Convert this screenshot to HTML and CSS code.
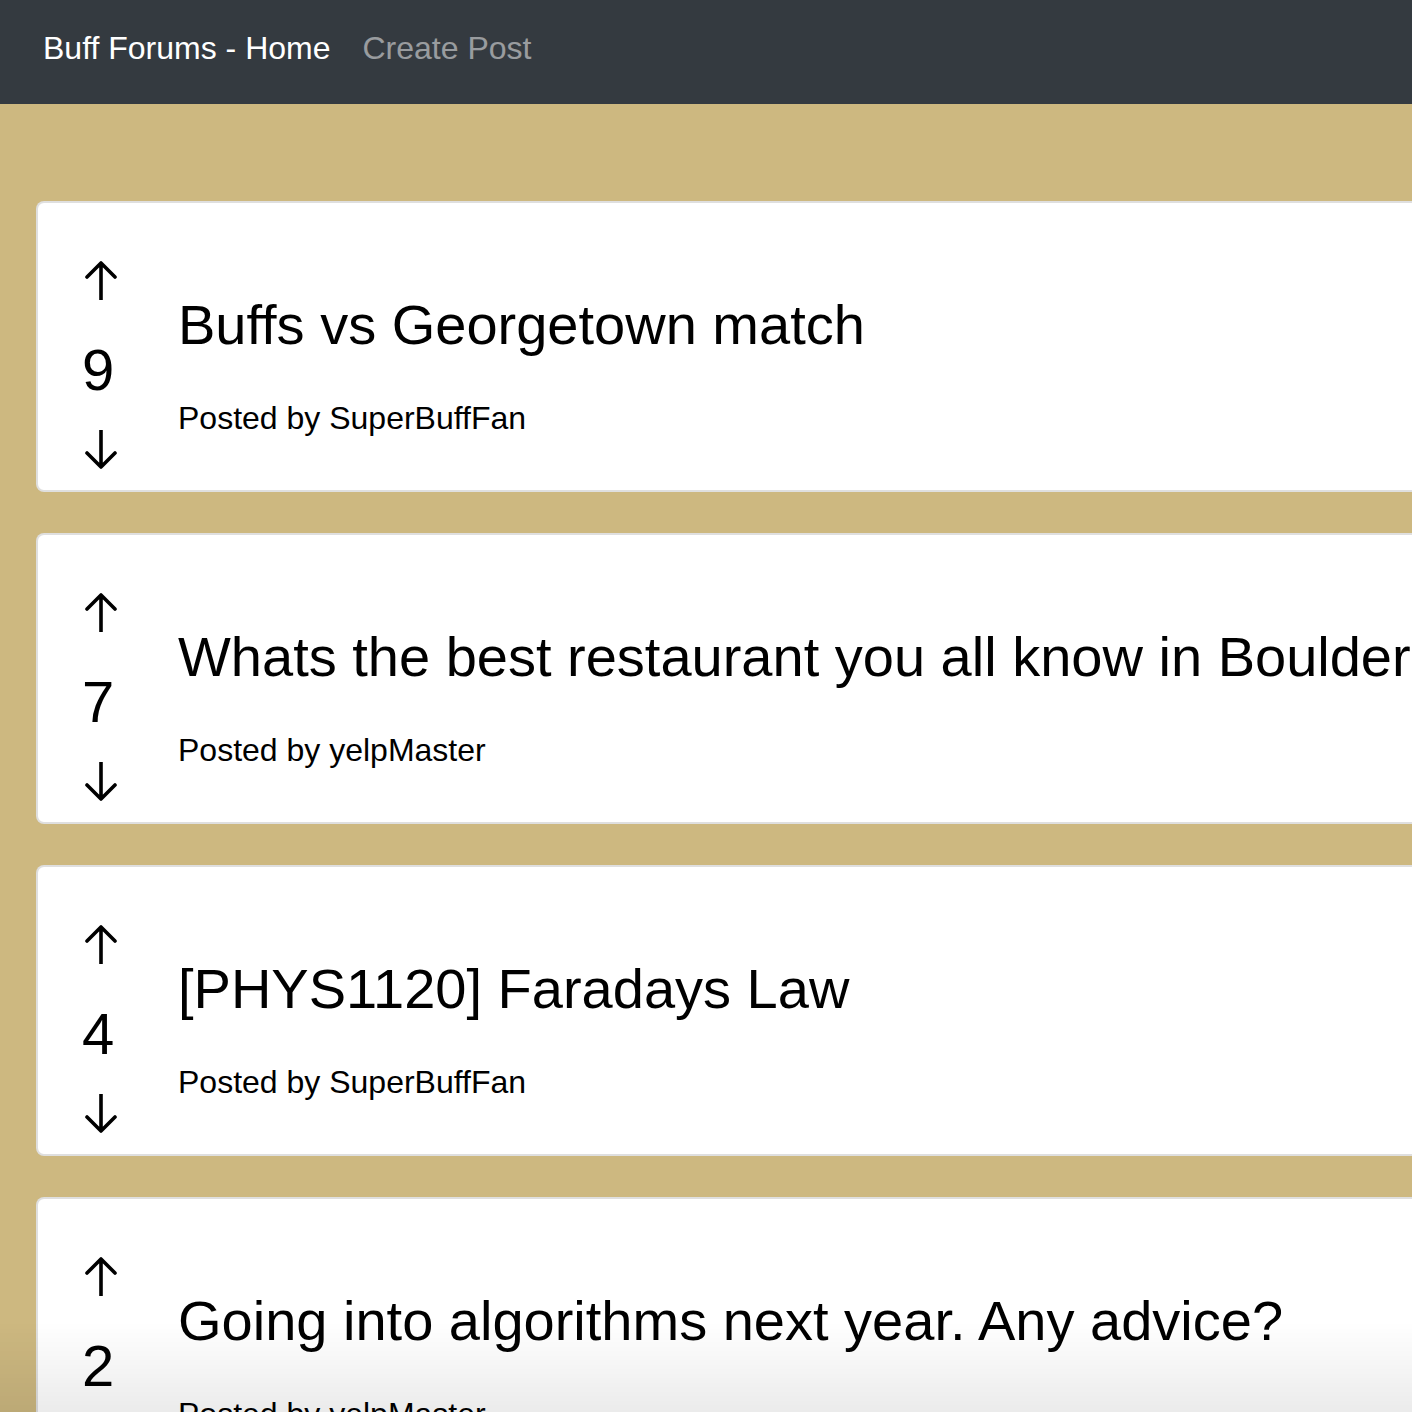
FILE: index.html
```html
<!DOCTYPE html>
<html lang="en">
<head>
<meta charset="utf-8">
<title>Buff Forums - Home</title>
<link rel="stylesheet" href="styles.css">
</head>
<body>
<nav class="navbar">
  <a class="brand" href="#">Buff Forums - Home</a>
  <a class="nav-link" href="#">Create Post</a>
</nav>
<main class="posts">
  <div class="card">
    <div class="votes">
      <svg class="arrow" viewBox="0 0 34 40" width="34" height="40"><path d="M17 3V40M3 17L17 3L31 17"/></svg>
      <div class="count">9</div>
      <svg class="arrow" viewBox="0 0 34 40" width="34" height="40"><path d="M17 0V37M3 23L17 37L31 23"/></svg>
    </div>
    <div class="content">
      <h1 class="title">Buffs vs Georgetown match</h1>
      <p class="author">Posted by SuperBuffFan</p>
    </div>
  </div>
  <div class="card">
    <div class="votes">
      <svg class="arrow" viewBox="0 0 34 40" width="34" height="40"><path d="M17 3V40M3 17L17 3L31 17"/></svg>
      <div class="count">7</div>
      <svg class="arrow" viewBox="0 0 34 40" width="34" height="40"><path d="M17 0V37M3 23L17 37L31 23"/></svg>
    </div>
    <div class="content">
      <h1 class="title">Whats the best restaurant you all know in Boulder?</h1>
      <p class="author">Posted by yelpMaster</p>
    </div>
  </div>
  <div class="card">
    <div class="votes">
      <svg class="arrow" viewBox="0 0 34 40" width="34" height="40"><path d="M17 3V40M3 17L17 3L31 17"/></svg>
      <div class="count">4</div>
      <svg class="arrow" viewBox="0 0 34 40" width="34" height="40"><path d="M17 0V37M3 23L17 37L31 23"/></svg>
    </div>
    <div class="content">
      <h1 class="title">[PHYS1120] Faradays Law</h1>
      <p class="author">Posted by SuperBuffFan</p>
    </div>
  </div>
  <div class="card">
    <div class="votes">
      <svg class="arrow" viewBox="0 0 34 40" width="34" height="40"><path d="M17 3V40M3 17L17 3L31 17"/></svg>
      <div class="count">2</div>
      <svg class="arrow" viewBox="0 0 34 40" width="34" height="40"><path d="M17 0V37M3 23L17 37L31 23"/></svg>
    </div>
    <div class="content">
      <h1 class="title">Going into algorithms next year. Any advice?</h1>
      <p class="author">Posted by yelpMaster</p>
    </div>
  </div>
</main>
<div class="bottom-fade"></div>
</body>
</html>
```

FILE: styles.css
```css
html, body {
  margin: 0;
  padding: 0;
}
body {
  background: #cdb880;
  font-family: "Liberation Sans", Arial, Helvetica, sans-serif;
  color: #000;
  overflow: hidden;
  width: 1412px;
  height: 1412px;
}
.navbar {
  background: #343a40;
  height: 104px;
  box-sizing: border-box;
  padding: 24px 43px 32px;
  display: flex;
  align-items: flex-start;
  gap: 32px;
}
.navbar a {
  font-size: 32px;
  line-height: 48px;
  text-decoration: none;
  white-space: nowrap;
}
.brand {
  color: #fff;
}
.nav-link {
  color: rgba(255, 255, 255, 0.5);
}
.posts {
  padding: 97px 0 0 36px;
  display: flex;
  flex-direction: column;
  gap: 41px;
  width: 1700px;
}
.card {
  background: #fff;
  border: 2px solid rgba(0, 0, 0, 0.125);
  border-radius: 8px;
  display: flex;
  align-items: center;
  padding: 57px 0 20px 46px;
}
.votes {
  width: 94px;
  flex: none;
  display: flex;
  flex-direction: column;
  align-items: flex-start;
}
.arrow {
  display: block;
  fill: none;
  stroke: #000;
  stroke-width: 3.6;
  stroke-linecap: round;
  stroke-linejoin: round;
}
.count {
  font-size: 58px;
  line-height: 58px;
  margin: 41px 0 31px -2px;
}
.content {
  white-space: nowrap;
  margin-top: 3px;
}
.title {
  font-size: 56px;
  line-height: 1.2;
  font-weight: 400;
  margin: 0 0 36px;
}
.author {
  font-size: 32px;
  line-height: 1.5;
  margin: 0;
}
.bottom-fade {
  position: fixed;
  left: 0;
  right: 0;
  bottom: 0;
  height: 90px;
  background: linear-gradient(to bottom, rgba(0, 0, 0, 0), rgba(0, 0, 0, 0.08));
  pointer-events: none;
}
```
